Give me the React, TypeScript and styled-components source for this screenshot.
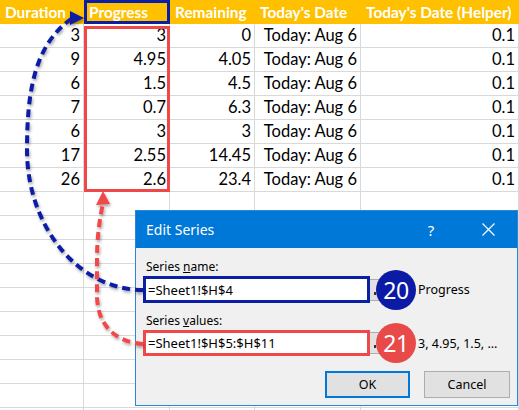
import React from 'react';
import styled, { createGlobalStyle } from 'styled-components';

const BLUE = '#0b1fa5';
const RED = '#ef4848';

const GlobalStyle = createGlobalStyle`
  html, body { margin: 0; padding: 0; background: #fff; }
  body { overflow: hidden; }
`;

const Page = styled.div`
  position: relative;
  width: 519px;
  height: 410px;
  overflow: hidden;
  background: #fff;
`;

const Sheet = styled.div`
  display: grid;
  grid-template-columns: 84px 86px 85px 106px 158px;
  grid-auto-rows: 24px;
  font-family: Lato, 'Liberation Sans', sans-serif;
  font-size: 16.5px;
  color: #000;
`;

const HeaderCell = styled.div<{ $selected?: boolean; $c: number }>`
  grid-row: 1;
  grid-column: ${(p) => p.$c};
  box-sizing: border-box;
  background: #ffc000;
  color: #fff;
  font-weight: 700;
  font-size: 15.4px;
  display: flex;
  align-items: center;
  padding: 0 3px 0 5px;
  white-space: nowrap;
  box-shadow: ${(p) => (p.$selected ? `inset 0 0 0 3px ${BLUE}` : 'none')};
`;

const Cell = styled.div<{ $r: number; $c: number }>`
  grid-row: ${(p) => p.$r};
  grid-column: ${(p) => p.$c};
  box-sizing: border-box;
  border-right: 1px solid #d9d9d9;
  border-bottom: 1px solid #d9d9d9;
  display: flex;
  align-items: flex-end;
  justify-content: flex-end;
  padding: 0 3px 1px 4px;
  line-height: 21px;
  white-space: nowrap;
`;

const RangeHighlight = styled.div`
  grid-column: 2;
  grid-row: 2 / 9;
  margin-top: 2px;
  border: 3px solid ${RED};
  pointer-events: none;
  z-index: 1;
`;

const Dialog = styled.div`
  position: absolute;
  left: 135px;
  top: 210px;
  width: 383px;
  height: 196px;
  box-sizing: border-box;
  border: 1px solid #2b86d6;
  background: #f0f0f0;
  font-family: 'Noto Sans', 'Open Sans', sans-serif;
  color: #000;
  z-index: 2;
  display: flex;
  flex-direction: column;
`;

const TitleBar = styled.div`
  height: 37px;
  flex: none;
  background: #0078d7;
  color: #fff;
  display: flex;
  align-items: center;
  padding: 0 9px 0 10px;
`;

const Title = styled.div`
  flex: 1;
  font-size: 14px;
`;

const Help = styled.div`
  width: 30px;
  text-align: center;
  font-size: 15px;
`;

const Close = styled.div`
  width: 40px;
  margin-left: 22px;
  display: flex;
  justify-content: center;
  align-items: center;
`;

const Body = styled.div`
  padding: 11px 7px 0 7px;
  display: flex;
  flex-direction: column;
`;

const Label = styled.div<{ $gap?: number }>`
  font-size: 12px;
  line-height: 16px;
  padding-left: 3px;
  margin-top: ${(p) => p.$gap ?? 0}px;
  margin-bottom: 1px;
`;

const FieldRow = styled.div`
  display: flex;
  align-items: center;
`;

const RefInput = styled.div<{ $color: string; $h: number }>`
  box-sizing: border-box;
  width: 227px;
  height: ${(p) => p.$h}px;
  border: 3px solid ${(p) => p.$color};
  background: #fff;
  display: flex;
  align-items: center;
  padding-left: 2px;
  font-size: 13px;
  white-space: nowrap;
`;

const RangeSlot = styled.div`
  position: relative;
  width: 48px;
  height: 22px;
  flex: none;
`;

const RangeButton = styled.div`
  position: absolute;
  left: 0;
  top: 0;
  width: 18px;
  height: 22px;
  box-sizing: border-box;
  background: #e1e1e1;
  border: 1px solid #adadad;
  border-left: none;
`;

const RangeMark = styled.div`
  position: absolute;
  left: 4px;
  top: 12px;
  width: 2px;
  height: 3px;
  background: #333;
`;

const Badge = styled.div<{ $color: string }>`
  position: absolute;
  left: 6px;
  top: -9px;
  width: 40px;
  height: 40px;
  border-radius: 50%;
  background: ${(p) => p.$color};
  color: #fff;
  display: flex;
  align-items: center;
  justify-content: center;
  font-family: 'Noto Sans', sans-serif;
  font-size: 23px;
  letter-spacing: -0.5px;
`;

const Hint = styled.div`
  font-size: 12.5px;
  white-space: nowrap;
`;

const ButtonRow = styled.div`
  display: flex;
  justify-content: flex-end;
  gap: 14px;
  margin-top: 15px;
`;

const DlgButton = styled.div<{ $primary?: boolean; $w: number }>`
  box-sizing: border-box;
  width: ${(p) => p.$w}px;
  height: 27px;
  background: #e1e1e1;
  border: ${(p) => (p.$primary ? '2px solid #0078d7' : '1px solid #adadad')};
  display: flex;
  align-items: center;
  justify-content: center;
  font-size: 12.5px;
`;

const Overlay = styled.svg`
  position: absolute;
  left: 0;
  top: 0;
  width: 519px;
  height: 410px;
  z-index: 3;
  pointer-events: none;
`;

const rows: string[][] = [
  ['3', '3', '0'],
  ['9', '4.95', '4.05'],
  ['6', '1.5', '4.5'],
  ['7', '0.7', '6.3'],
  ['6', '3', '3'],
  ['17', '2.55', '14.45'],
  ['26', '2.6', '23.4'],
].map((r) => [...r, 'Today: Aug 6', '0.1']);

const emptyRows: string[][] = Array.from({ length: 10 }, () => ['', '', '', '', '']);

const headers = ['Duration', 'Progress', 'Remaining', "Today's Date", "Today's Date (Helper)"];

export default function App() {
  const all = [...rows, ...emptyRows];
  return (
    <Page>
      <GlobalStyle />
      <Sheet>
        {headers.map((h, i) => (
          <HeaderCell key={h} $c={i + 1} $selected={i === 1}>
            {h}
          </HeaderCell>
        ))}
        {all.map((r, ri) =>
          r.map((v, ci) => (
            <Cell key={`${ri}-${ci}`} $r={ri + 2} $c={ci + 1}>
              {v}
            </Cell>
          ))
        )}
        <RangeHighlight />
      </Sheet>

      <Dialog>
        <TitleBar>
          <Title>Edit Series</Title>
          <Help>?</Help>
          <Close>
            <svg width="13" height="13" viewBox="0 0 13 13">
              <path d="M0.5 0.5 L12.5 12.5 M12.5 0.5 L0.5 12.5" stroke="#fff" strokeWidth="1.2" />
            </svg>
          </Close>
        </TitleBar>
        <Body>
          <Label>
            Series <u>n</u>ame:
          </Label>
          <FieldRow>
            <RefInput $color={BLUE} $h={27}>=Sheet1!$H$4</RefInput>
            <RangeSlot>
              <RangeButton>
                <RangeMark />
              </RangeButton>
              <Badge $color="#0b1ba6">20</Badge>
            </RangeSlot>
            <Hint>Progress</Hint>
          </FieldRow>
          <Label $gap={10}>
            Series <u>v</u>alues:
          </Label>
          <FieldRow>
            <RefInput $color={RED} $h={26}>=Sheet1!$H$5:$H$11</RefInput>
            <RangeSlot>
              <RangeButton>
                <RangeMark />
              </RangeButton>
              <Badge $color="#e84a4a">21</Badge>
            </RangeSlot>
            <Hint>3, 4.95, 1.5, ...</Hint>
          </FieldRow>
          <ButtonRow>
            <DlgButton $primary $w={85}>OK</DlgButton>
            <DlgButton $w={86}>Cancel</DlgButton>
          </ButtonRow>
        </Body>
      </Dialog>

      <Overlay viewBox="0 0 519 410">
        <defs>
          <filter id="sh" x="-20%" y="-20%" width="140%" height="140%">
            <feDropShadow dx="1" dy="2" stdDeviation="1.4" floodColor="#000" floodOpacity="0.35" />
          </filter>
        </defs>
        <g filter="url(#sh)">
          <path
            d="M143 290 A116 140 0 0 1 27 150 C27 90 35 45 71 19"
            fill="none"
            stroke={BLUE}
            strokeWidth="4"
            strokeDasharray="8 5"
          />
          <polygon points="70,11 84,18 70,25" fill={BLUE} />
          <path
            d="M143 344 C115 342 97 325 97 295 L97 260 C97 235 100 218 103 203"
            fill="none"
            stroke={RED}
            strokeWidth="4"
            strokeDasharray="8 5"
          />
          <polygon points="103,191 96,205 110,204" fill={RED} />
        </g>
      </Overlay>
    </Page>
  );
}
